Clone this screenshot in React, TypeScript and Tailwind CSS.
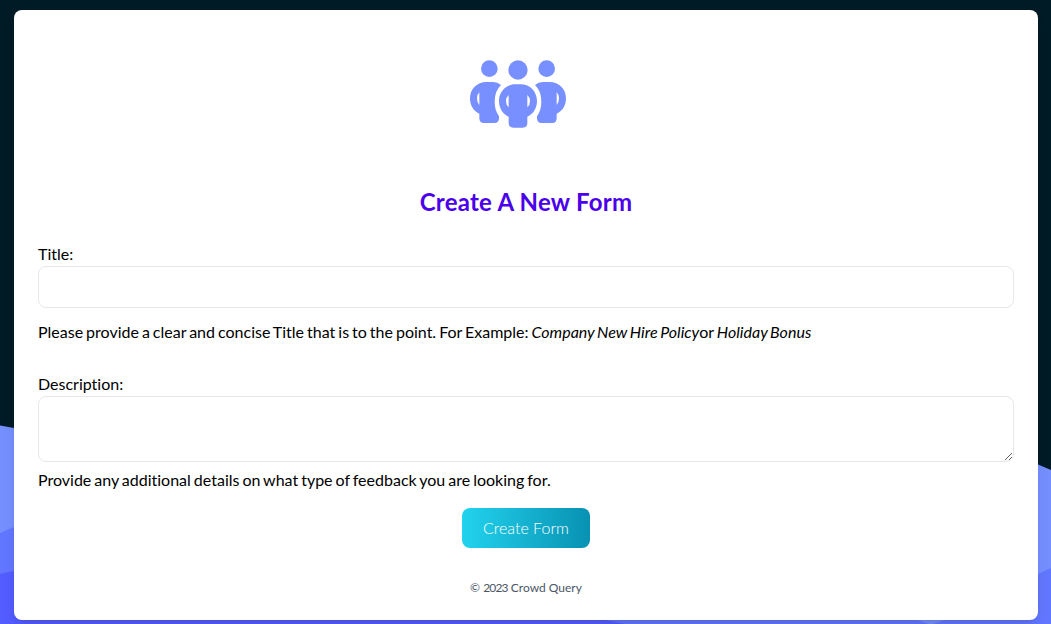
function Waves() {
  return (
    <svg className="absolute inset-0 h-full w-full" viewBox="0 0 1051 624" preserveAspectRatio="none" aria-hidden="true">
      <path d="M0 425.5L14 428L500 520L1038 464.5L1051 470V624H0Z" fill="#758fff" />
      <path d="M0 533L14 527L500 560L1038 574L1051 568V624H0Z" fill="#6277ff" />
      <path d="M915 619L947 619L931 625Z" fill="#758fff" />
      <path d="M0 574L14 571L300 560L605 620L625 624H0Z" fill="#535cff" />
    </svg>
  );
}

function GroupLogo() {
  return (
    <svg className="h-[100px] w-[140px]" viewBox="0 0 420 300" fill="#7890ff" aria-label="Crowd Query">
      <circle cx="118" cy="71" r="25" />
      <circle cx="204" cy="75" r="29" />
      <circle cx="290" cy="71" r="25" />
      <path
        fillRule="evenodd"
        d="M109 111H129Q143 111 153 120Q134 138 134 169Q134 196 147 214V220Q147 234 133 234H101Q88 234 88 220V206C70 198 60 181 60 160C60 132 81 111 109 111ZM88 142Q81 149 81 160Q81 173 88 180Z"
      />
      <path
        fillRule="evenodd"
        d="M299 111H279Q265 111 255 120Q274 138 274 169Q274 196 261 214V220Q261 234 275 234H307Q320 234 320 220V206C338 198 348 181 348 160C348 132 327 111 299 111ZM320 142Q327 149 327 160Q327 173 320 180Z"
      />
      <path
        fillRule="evenodd"
        d="M196 118H212C240 118 261 140 261 168C261 189 250 207 232 215V234Q232 248 218 248H190Q176 248 176 234V215C158 207 147 189 147 168C147 140 168 118 196 118ZM176 150Q168 157 168 168Q168 180 176 187ZM232 150Q240 157 240 168Q240 180 232 187Z"
      />
    </svg>
  );
}

export default function App() {
  return (
    <div className="relative h-[624px] overflow-hidden bg-[#001b26] px-3.5 pt-2.5 pr-[13px] font-['Lato',sans-serif] text-black [font-variant-ligatures:none]">
      <Waves />
      <main className="relative flex h-[610px] flex-col rounded-lg bg-white px-6 shadow-lg">
        <div className="mt-[35px] -ml-3 flex justify-center">
          <GroupLogo />
        </div>
        <h1 className="mt-[41px] text-center text-2xl leading-8 font-bold tracking-[0.24px] text-[#4b00eb]">Create A New Form</h1>
        <form className="mt-6 flex flex-col [word-spacing:-1.1px]">
          <label htmlFor="title" className="text-base leading-6">Title:</label>
          <input id="title" className="h-[42px] w-full rounded-lg border border-gray-200 px-3 outline-none" />
          <p className="mt-3 text-base leading-6">
            Please provide a clear and concise Title that is to the point. For Example: <em>Company New Hire Policy</em>or{' '}
            <em>Holiday Bonus</em>
          </p>
          <label htmlFor="description" className="mt-7 text-base leading-6">Description:</label>
          <textarea id="description" className="block h-[66px] w-full resize rounded-lg border border-gray-200 px-3 py-2 outline-none" />
          <p className="mt-[6px] text-base leading-6">Provide any additional details on what type of feedback you are looking for.</p>
          <button
            type="button"
            className="mt-4 h-10 w-32 self-center rounded-lg bg-linear-to-r/srgb from-[#22d3ee] to-[#0891b2] text-base font-light text-white"
          >
            Create Form
          </button>
        </form>
        <footer className="mt-8 text-center text-xs leading-4 text-gray-600">
          © <span className="tracking-[-0.8px]">2023</span> Crowd Query
        </footer>
      </main>
    </div>
  );
}
